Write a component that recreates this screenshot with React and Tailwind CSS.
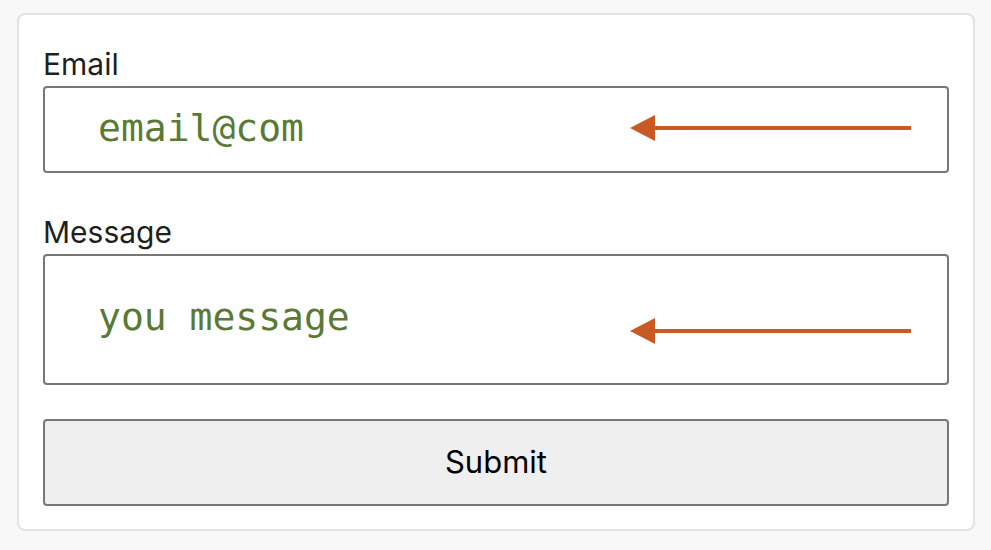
import React from "react";

function Arrow() {
  return (
    <svg width="282" height="28" viewBox="0 0 282 28" className="shrink-0">
      <line x1="22" y1="14" x2="281" y2="14" stroke="#c95a24" strokeWidth="4" />
      <polygon points="0,14 25,1 25,27" fill="#c95a24" />
    </svg>
  );
}

function Field({ label, value, height, textClass, arrowClass }) {
  return (
    <div className="flex flex-col">
      <label className="text-[30px] leading-[36px] text-[#1f1f1f] mb-[4px]">{label}</label>
      <div
        className={`flex items-center justify-between border-2 border-[#777777] rounded-[4px] bg-white pl-[53px] pr-[35px] ${height}`}
      >
        <span
          className={`text-[38px] text-[#587a35] ${textClass}`}
          style={{ fontFamily: '"DejaVu Sans Mono", "Liberation Mono", monospace' }}
        >
          {value}
        </span>
        <div className={arrowClass}>
          <Arrow />
        </div>
      </div>
    </div>
  );
}

export default function App() {
  return (
    <div
      className="w-[991px] h-[550px] bg-[#f8f8f8] pt-[13px] pl-[17px]"
      style={{ fontFamily: 'Inter, "Liberation Sans", Arial, sans-serif' }}
    >
      <div className="w-[958px] h-[518px] bg-white border-2 border-[#e3e3e3] rounded-[8px] px-[24px] pt-[31px]">
        <Field label="Email" value="email@com" height="h-[87px]" textClass="-mt-[3px]" arrowClass="-mt-[3px]" />
        <div className="h-[41px]" />
        <Field
          label="Message"
          value="you message"
          height="h-[131px]"
          textClass="-mt-[4px]"
          arrowClass="mt-[22px]"
        />
        <button className="mt-[34px] w-full h-[87px] bg-[#efefef] border-2 border-[#777777] rounded-[4px] text-[31px] text-black">
          Submit
        </button>
      </div>
    </div>
  );
}
